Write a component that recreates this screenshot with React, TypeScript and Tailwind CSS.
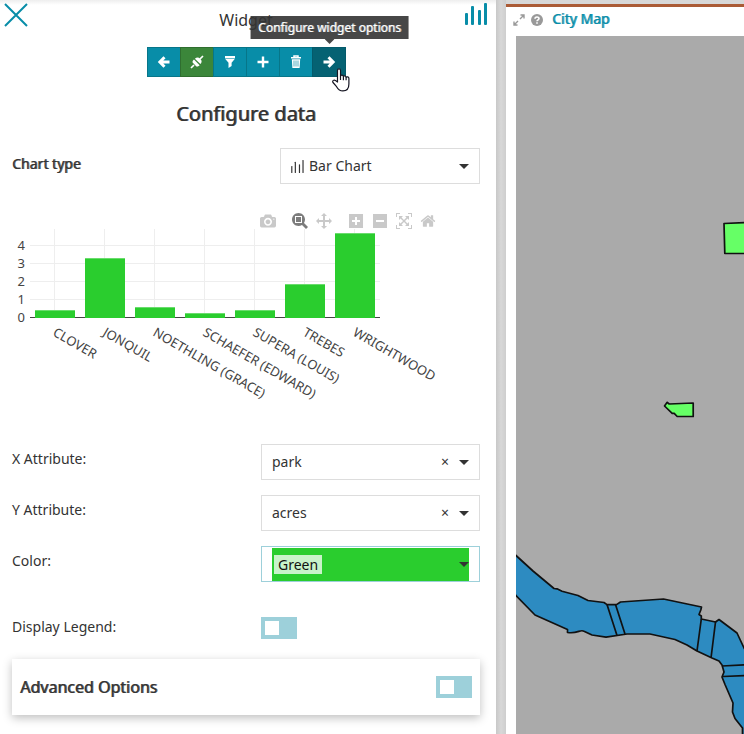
import React from 'react';

const boldish = '[text-shadow:1px_0_rgb(51_51_51/80%)]';

const bars = [
  { name: 'CLOVER', top: 81 },
  { name: 'JONQUIL', top: 29 },
  { name: 'NOETHLING (GRACE)', top: 78 },
  { name: 'SCHAEFER (EDWARD)', top: 84 },
  { name: 'SUPERA (LOUIS)', top: 81 },
  { name: 'TREBES', top: 55 },
  { name: 'WRIGHTWOOD', top: 4 },
];

const modeIcons = {
  camera:
    'm500 450c-83 0-150-67-150-150 0-83 67-150 150-150 83 0 150 67 150 150 0 83-67 150-150 150z m400 150h-120c-16 0-34 13-39 29l-31 93c-6 15-23 28-40 28h-340c-16 0-34-13-39-28l-31-94c-6-15-23-28-40-28h-120c-55 0-100-45-100-100v-450c0-55 45-100 100-100h800c55 0 100 45 100 100v450c0 55-45 100-100 100z m-400-550c-138 0-250 112-250 250 0 138 112 250 250 250 138 0 250-112 250-250 0-138-112-250-250-250z m365 380c-19 0-35 16-35 35 0 19 16 35 35 35 19 0 35-16 35-35 0-19-16-35-35-35z',
  zoom: 'm1000-25l-250 251c40 63 63 138 63 218 0 224-182 406-407 406-224 0-406-182-406-406s183-406 407-406c80 0 155 22 218 62l250-250 125 125z m-812 250l0 438 437 0 0-438-437 0z m62 375l313 0 0-312-313 0 0 312z',
  pan: 'm1000 350l-187 188 0-125-250 0 0 250 125 0-188 187-187-187 125 0 0-250-250 0 0 125-188-188 186-187 0 125 252 0 0-250-125 0 187-188 188 188-125 0 0 250 250 0 0-126 187 188z',
  plus: 'm1 787l0-875 875 0 0 875-875 0z m687-500l-187 0 0-187-125 0 0 187-188 0 0 125 188 0 0 187 125 0 0-187 187 0 0-125z',
  minus: 'm0 788l0-876 875 0 0 876-875 0z m688-500l-500 0 0 125 500 0 0-125z',
  auto: 'm250 850l-187 0-63 0 0-62 0-188 63 0 0 188 187 0 0 62z m688 0l-188 0 0-62 188 0 0-188 62 0 0 188 0 62-62 0z m-875-938l0 188-63 0 0-188 0-62 63 0 187 0 0 62-187 0z m875 188l0-188-188 0 0-62 188 0 62 0 0 62 0 188-62 0z m-125 188l-1 0-93-94-156 156 156 156 92-93 2 0 0 250-250 0 0-2 93-92-156-156-156 156 94 92 0 2-250 0 0-250 0 0 93 93 157-156-157-156-93 94 0 0 0-250 250 0 0 0-94 93 156 157 156-157-93-93 0 0 250 0 0 250z',
  home: 'm786 296v-267q0-15-11-26t-25-10h-214v214h-143v-214h-214q-15 0-25 10t-11 26v267q0 1 0 2t0 2l321 264 321-264q1-1 1-4z m124 39l-34-41q-5-5-12-6h-2q-7 0-12 3l-386 322-386-322q-7-4-13-4-7 2-12 7l-35 41q-4 5-3 13t6 12l401 334q18 15 42 15t43-15l136-114v109q0 8 5 13t13 5h107q8 0 13-5t5-13v-227l122-102q5-5 6-12t-4-13z',
};

function ModeButton({ label, path, size = 1000, active = false }: { label: string; path: string; size?: number; active?: boolean }) {
  return (
    <button type="button" aria-label={label} className={active ? 'size-4 text-[#7c7c7c]' : 'size-4 text-[#c9c9c9]'}>
      <svg viewBox={`0 0 ${size} 1000`} className="size-4" fill="currentColor" fillRule="evenodd">
        <path d={path} transform="matrix(1 0 0 -1 0 850)" />
      </svg>
    </button>
  );
}

function ModeBar() {
  return (
    <div className="ml-[248px] flex gap-4">
      <ModeButton label="Download plot" path={modeIcons.camera} />
      <div className="flex gap-2">
        <ModeButton label="Zoom" path={modeIcons.zoom} active />
        <ModeButton label="Pan" path={modeIcons.pan} />
      </div>
      <div className="flex gap-2">
        <ModeButton label="Zoom in" path={modeIcons.plus} size={875} />
        <ModeButton label="Zoom out" path={modeIcons.minus} size={875} />
        <ModeButton label="Autoscale" path={modeIcons.auto} />
        <ModeButton label="Reset axes" path={modeIcons.home} size={928} />
      </div>
    </div>
  );
}

function BarChart() {
  return (
    <svg className="block h-[215px] w-full" fontSize="13" fill="#444" role="img" aria-label="Acres by park">
      {bars.map((b, i) => (
        <rect key={b.name} x={42 + i * 50} y="0" width="1" height="88" fill="#eee" />
      ))}
      {[16, 34, 52, 70].map((y) => (
        <rect key={y} x="18" y={y} width="350" height="1" fill="#eee" />
      ))}
      <rect x="18" y="88" width="350" height="1" />
      {[4, 3, 2, 1, 0].map((n, i) => (
        <text key={n} x="13" y={21 + i * 18} textAnchor="end">{n}</text>
      ))}
      {bars.map((b, i) => (
        <g key={b.name}>
          <rect x={23 + i * 50} y={b.top} width="40" height={89 - b.top} fill="#2acd2e" />
          <rect x={23 + i * 50} y={b.top} width="40" height="1" fill="#6adc6d" />
          <text transform={`translate(${40 + i * 50} 106) rotate(30)`}>{b.name}</text>
        </g>
      ))}
    </svg>
  );
}

function Caret() {
  return (
    <svg viewBox="0 0 10 5" className="pointer-events-none h-[5px] w-[10px] shrink-0" fill="#333">
      <path d="M0 0h10L5 5z" />
    </svg>
  );
}

function Bars({ className, thin = false }: { className: string; thin?: boolean }) {
  const w = thin ? 2 : 3;
  return (
    <svg viewBox="0 0 23 22" className={className} fill="currentColor">
      <rect x="0" y="10" width={w} height="12" rx="1" />
      <rect x="6" y="3" width={w} height="19" rx="1" />
      <rect x="13" y="7" width={w} height="15" rx="1" />
      <rect x="19" y="0" width={w} height="22" rx="1" />
    </svg>
  );
}

function AttributeRow({ id, label, value }: { id: string; label: string; value: string }) {
  return (
    <div className="mb-[15px] flex justify-between">
      <label htmlFor={id} className="pt-[5px]">{label}</label>
      <div className="flex h-9 w-[219px] items-center border border-[#ddd] px-[10px]">
        <select id={id} className="h-full min-w-0 flex-1 appearance-none bg-transparent outline-none">
          <option>{value}</option>
        </select>
        <button type="button" aria-label={`Clear ${label}`} className="mr-2 w-3 text-sm leading-5">×</button>
        <Caret />
      </div>
    </div>
  );
}

function Toggle({ id }: { id: string }) {
  return (
    <span className="flex h-[22px] w-9 bg-[#9dd0da] p-1">
      <input id={id} type="checkbox" className="size-[14px] appearance-none bg-white" />
    </span>
  );
}

function ToolButton({ label, tone = 'teal', children }: { label: string; tone?: 'teal' | 'green' | 'dark'; children: React.ReactNode }) {
  const tones = {
    teal: 'border-[#077689] bg-[#088da8]',
    green: 'border-[#2f6e2f] bg-[#3b863a]',
    dark: 'border-[#045a6b] bg-[#056273]',
  };
  return (
    <button type="button" aria-label={label} className={`-ml-px flex h-[30px] w-[34px] items-center justify-center border text-white ${tones[tone]}`}>
      <svg viewBox="0 0 14 14" className="size-[14px]" fill="none" stroke="currentColor">{children}</svg>
    </button>
  );
}

function Toolbar() {
  return (
    <div className="flex justify-center pr-[2px]">
      <ToolButton label="Back">
        <path d="M12.5 7H3M7.5 2.2 2.8 7l4.7 4.8" strokeWidth="2.9" />
      </ToolButton>
      <ToolButton label="Connection" tone="green">
        <path d="M1 13l3-3M10 4l3-3" strokeWidth="1.7" />
        <path d="M2.600 7.600 6.400 11.400C8 11.800 9 10.900 9.600 10.200L4 4.400C2.700 5.500 2.300 6.500 2.600 7.600zM4.900 3.700C6.500 2.200 8.300 1.700 10.300 3.700c2 2 1.500 3.800.1 5.400z" fill="currentColor" stroke="none" />
      </ToolButton>
      <ToolButton label="Filter">
        <path d="M2 1h10v2H2zM2.300 4h9.400L8.600 7.800V11L5.500 13V7.800z" fill="currentColor" stroke="none" />
        <path d="M2 3.200h10" strokeWidth="1" strokeOpacity="0.600" />
      </ToolButton>
      <ToolButton label="Add">
        <path d="M7 1.500v11M1.500 7h11" strokeWidth="2.400" />
      </ToolButton>
      <ToolButton label="Delete">
        <path d="M2 2.800h10M5 2.500V1h4v1.500" strokeWidth="1.500" />
        <path d="M2.800 4.300h8.400l-.6 8.700H3.400z" fill="currentColor" stroke="none" />
        <path d="M5 5.500v6M7 5.500v6M9 5.500v6" stroke="#088da8" strokeWidth="0.700" />
      </ToolButton>
      <div className="relative">
        <ToolButton label="Configure widget options" tone="dark">
          <path d="M1.500 7H11M6.500 2.200 11.200 7l-4.700 4.800" strokeWidth="2.900" />
        </ToolButton>
        <div role="tooltip" className="absolute bottom-[38px] left-1/2 -translate-x-1/2 bg-[#333]/90 px-2 text-xs leading-[23px] whitespace-nowrap text-white [text-shadow:1px_0_rgb(255_255_255/60%)]">
          Configure widget options
          <svg viewBox="0 0 10 5" className="absolute top-full left-1/2 h-[5px] w-[10px] -translate-x-1/2" fill="#474747"><path d="M0 0h10L5 5z" /></svg>
        </div>
        <svg viewBox="0 0 18 24" className="absolute top-[21px] left-[19px] h-6 w-[18px]" fill="#fff" stroke="#151522" strokeWidth="1.200" strokeLinejoin="round">
          <path d="M5.500 14V2.500c0-2.200 3-2.200 3 0V8c.4-1.300 2.700-1.200 2.900.5.500-1.100 2.600-.8 2.700.8.700-.9 2.800-.5 2.800 1.200V16c0 4-1.900 6.900-6 6.900-3.800 0-5-1.900-6.300-4.200L1 14.500c-1-1.800 1-3.200 2.500-1.900z" />
          <path d="M8.500 8v4M11.400 8.500v3.700M14.100 9.300v3" />
        </svg>
      </div>
    </div>
  );
}

function ConfigPanel() {
  return (
    <section className="w-2/3 bg-white bg-linear-to-b from-[#eee] to-white to-[5px]">
      <header className="grid h-[47px] grid-cols-[1fr_auto_1fr] items-start pt-[3px] pr-2 pl-1">
        <button type="button" aria-label="Close" className="w-6 text-[#088da8]">
          <svg viewBox="0 0 24 24" className="size-6" fill="none" stroke="currentColor" strokeWidth="2"><path d="M1 1l22 22M23 1L1 23" /></svg>
        </button>
        <h1 className="pt-[5px] text-base leading-6">Widget</h1>
        <Bars className="h-[22px] w-[23px] justify-self-end text-[#088da8]" />
      </header>
      <Toolbar />
      <div className="pr-4 pl-3">
        <h2 className={`mt-6 mb-[21px] text-center text-xl leading-[26px] ${boldish}`}>Configure data</h2>
        <div className="mb-[29px] flex justify-between">
          <label htmlFor="chart-type" className={`pt-[6px] ${boldish}`}>Chart type</label>
          <div className="flex h-9 w-[200px] items-center border border-[#ddd] px-[10px]">
            <Bars className="mr-1 h-[13px] w-[14px]" thin />
            <select id="chart-type" className="h-full min-w-0 flex-1 appearance-none bg-transparent outline-none">
              <option>Bar Chart</option>
            </select>
            <Caret />
          </div>
        </div>
        <ModeBar />
        <BarChart />
        <AttributeRow id="x-attribute" label="X Attribute:" value="park" />
        <AttributeRow id="y-attribute" label="Y Attribute:" value="acres" />
        <div className="mb-[35px] flex justify-between">
          <label htmlFor="color" className="pt-[5px]">Color:</label>
          <div className="h-9 w-[219px] border border-[#9dd0da] px-[10px] pt-px">
            <div className="flex h-[33px] items-center justify-between bg-[#2acd2e] pl-[2px]">
              <select id="color" className="h-[19px] w-12 appearance-none bg-white/75 px-1 leading-[19px] text-[#111] outline-none">
                <option>Green</option>
              </select>
              <Caret />
            </div>
          </div>
        </div>
        <div className="mb-5 flex justify-between">
          <label htmlFor="legend">Display Legend:</label>
          <div className="w-[219px]"><Toggle id="legend" /></div>
        </div>
        <div className="flex h-14 items-center justify-between bg-white px-2 shadow-[0_3px_9px_rgb(0_0_0/25%)]">
          <label htmlFor="advanced" className={`text-base ${boldish}`}>Advanced Options</label>
          <Toggle id="advanced" />
        </div>
      </div>
    </section>
  );
}

function MapPanel() {
  return (
    <section className="flex min-w-0 flex-1 flex-col pt-1">
      <header className="flex h-8 items-center border-t-[3px] border-[#ab5b36] bg-white pb-[3px] pl-[7px]">
        <button type="button" aria-label="Expand" className="mr-[6px] text-[#999]">
          <svg viewBox="0 0 12 12" className="size-3" fill="none" stroke="currentColor" strokeWidth="1.400">
            <path d="M7 5l4-4M7.500 1H11v3.500M5 7l-4 4M1 7.500V11h3.500" />
          </svg>
        </button>
        <button type="button" aria-label="Help" className="mr-[9px]">
          <svg viewBox="0 0 12 12" className="size-3" fill="none" stroke="#fff">
            <circle cx="6" cy="6" r="6" fill="#999" stroke="none" />
            <path d="M4 4.700C4 2.500 8 2.400 8 4.500 8 5.800 6 5.800 6 7.300M6 8.200v1.500" strokeWidth="1.600" />
          </svg>
        </button>
        <h2 className="pb-[2px] text-sm text-[#088da8] [text-shadow:1px_0_rgb(8_141_168/80%)]">City Map</h2>
      </header>
      <div className="flex flex-1 bg-white pl-[10px]">
        <svg className="w-full bg-[#aaa]" stroke="#111" strokeWidth="1.700" strokeLinejoin="round" role="img" aria-label="Parks and river">
          <g transform="translate(-516 -36)">
            <path d="M724 223.500L760 222V253.500H724.800z" fill="#6f6" />
            <path d="M664.500 406l2.700-3.700 2 1.700 24-1v13.500h-16l-3-3.200h-2z" fill="#6f6" />
            <path
              d="M510 550L516 555.500 533 571 554 588.500 557 588.800 562 591.200 578 595.500 588 600.500 604 602.500 607 604.600H616.500L620.500 602 663.500 599 701.500 607 700.800 610 699 614.500 701.300 616 701.300 619 715.500 622 719 619.500 721 621 737 633 744 648 752 660V745H742.500V728L735 718.500 732.500 712 733 703 725 684.500 722 677 724 672 722 665 719 661 712 658 697 651 687 645 675 639.500 650 634H627L606 637.200 592 635 584 631.200C580 629 578 634 567.500 632.500V629.500L535 615 516 595.500 510 590z"
              fill="#2d8bc1"
            />
            <path d="M607 604.600l10 31M615.500 604.600L625 634M701.300 619L697 651M715.500 622L711 658M722 666L750 664.500M723 676.500L750 675.500" fill="none" />
          </g>
        </svg>
      </div>
    </section>
  );
}

export default function App() {
  return (
    <main className="flex min-h-screen bg-[#d8d8d8] text-sm leading-5 text-[#333] [font-family:'Noto_Sans',sans-serif]">
      <ConfigPanel />
      <div className="w-[10px] bg-linear-to-r from-[#c8c8c8] via-[#d8d8d8] to-[#cecece]" />
      <MapPanel />
    </main>
  );
}
